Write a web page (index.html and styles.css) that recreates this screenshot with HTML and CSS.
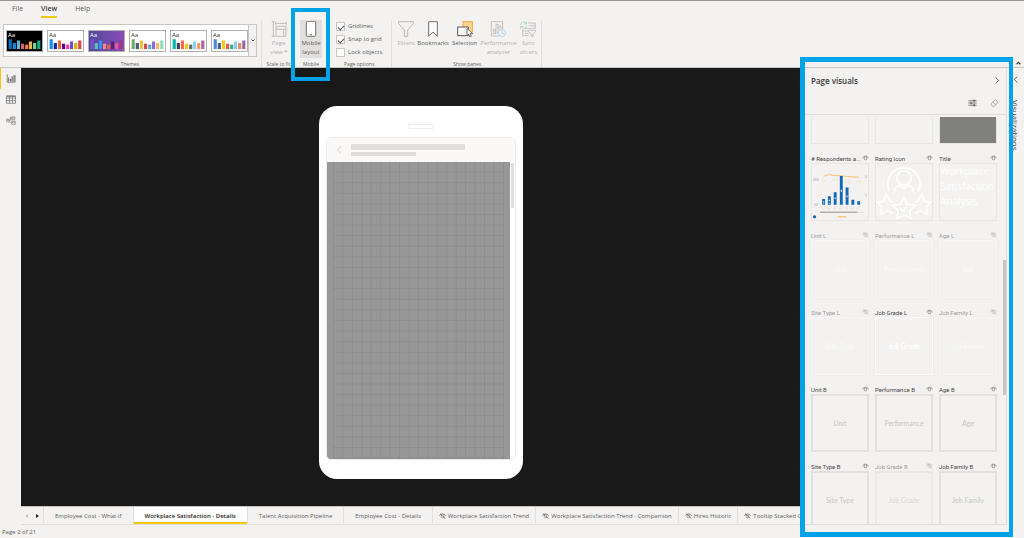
FILE: index.html
```html
<!DOCTYPE html>
<html lang="en">
<head>
<meta charset="utf-8">
<title>Report editor</title>
<link rel="stylesheet" href="styles.css">
</head>
<body>
<svg class="defs" aria-hidden="true">
  <symbol id="bars" viewBox="0 0 110 63">
    <rect x="5" y="26" width="10" height="31" fill="var(--c1)"/>
    <rect x="18" y="38" width="10" height="19" fill="var(--c2)"/>
    <rect x="31" y="30" width="10" height="27" fill="var(--c3)"/>
    <rect x="44" y="40" width="10" height="17" fill="var(--c4)"/>
    <rect x="57" y="43" width="10" height="14" fill="var(--c5)"/>
    <rect x="69" y="33" width="10" height="24" fill="var(--c6)"/>
    <rect x="82" y="38" width="10" height="19" fill="var(--c7)"/>
    <rect x="95" y="30" width="10" height="27" fill="var(--c8)"/>
  </symbol>
  <symbol id="eye" viewBox="0 0 20 16">
    <path d="M1 8Q10-3 19 8" fill="none" stroke="currentColor" stroke-width="2"/>
    <circle cx="10" cy="9" r="4" fill="none" stroke="currentColor" stroke-width="2"/>
  </symbol>
  <symbol id="eye-off" viewBox="0 0 20 16">
    <path d="M1 7Q10-3 19 7M3 1L18 15" fill="none" stroke="currentColor" stroke-width="2"/>
    <circle cx="10" cy="9" r="4" fill="none" stroke="currentColor" stroke-width="1.500"/>
  </symbol>
</svg>
<div class="app">
  <nav class="menu">
    <button>File</button>
    <button class="current">View</button>
    <button>Help</button>
  </nav>

  <header class="ribbon">
    <section class="group themes">
      <div class="gallery">
        <button class="theme t-dark" aria-label="Dark theme"><span>Aa</span><svg><use href="#bars"/></svg></button>
        <button class="theme t-default" aria-label="Default theme"><span>Aa</span><svg><use href="#bars"/></svg></button>
        <button class="theme t-purple" aria-label="Purple theme"><span>Aa</span><svg><use href="#bars"/></svg></button>
        <button class="theme t-green" aria-label="Green theme"><span>Aa</span><svg><use href="#bars"/></svg></button>
        <button class="theme t-teal" aria-label="Teal theme"><span>Aa</span><svg><use href="#bars"/></svg></button>
        <button class="theme t-blue" aria-label="Blue theme"><span>Aa</span><svg><use href="#bars"/></svg></button>
        <button class="more" aria-label="More themes"><svg viewBox="0 0 8 6"><path d="M1 1l3 3 3-3" fill="none" stroke="#444" stroke-width="2"/></svg></button>
      </div>
      <h2>Themes</h2>
    </section>

    <section class="group scale">
      <button class="tool off">
        <svg viewBox="0 0 48 48" fill="none" stroke="#b8b6b4" stroke-width="2.500"><path d="M7 1v46M2 2h10M2 46h10M14 3v10M46 3v10M14 7h32M15 16h30v30H15zM15 25h30M38 25v21"/></svg>
        <span>Page<br>view<i class="caret"></i></span>
      </button>
      <h2>Scale to fit</h2>
    </section>

    <section class="group mobile">
      <button class="tool pressed">
        <svg viewBox="0 0 48 48" fill="#fff" stroke="#555" stroke-width="2.500"><rect x="10" y="1" width="28" height="45" rx="3"/><path d="M20 41h7"/></svg>
        <span>Mobile<br>layout</span>
      </button>
      <h2>Mobile</h2>
      <div class="highlight step-one"></div>
    </section>

    <section class="group options">
      <div class="checks">
        <label><input type="checkbox" checked>Gridlines</label>
        <label><input type="checkbox" checked>Snap to grid</label>
        <label><input type="checkbox">Lock objects</label>
      </div>
      <h2>Page options</h2>
    </section>

    <section class="group panes">
      <div class="tools">
        <button class="tool off">
          <svg viewBox="0 0 48 48" fill="none" stroke="#b0aeac" stroke-width="2.500"><path d="M2 2h44v6L29 27v19H19V27L2 8z"/></svg>
          <span>Filters</span>
        </button>
        <button class="tool">
          <svg viewBox="0 0 48 48" fill="#fafafa" stroke="#555" stroke-width="2.500"><path d="M11 2h26v43L24 33 11 45z"/></svg>
          <span>Bookmarks</span>
        </button>
        <button class="tool">
          <svg viewBox="0 0 48 48" fill="#fff" stroke="#555" stroke-width="3"><path d="M18 2h28v32H18z" fill="#fbd88b" stroke="#f0a53a"/><path d="M2 18h32v26H2z"/><path d="M30 22v22l5-5 4 9 4-2-4-8h8z" stroke-width="2.500"/></svg>
          <span>Selection</span>
        </button>
        <button class="tool off">
          <svg viewBox="0 0 48 48" fill="none" stroke="#bdbbb9" stroke-width="2.500"><path d="M28 45H4V2h34v22M10 39V25h6v14zM18 39V10h6v29M27 25V16h6v8"/><circle cx="36" cy="36" r="10.500" stroke="#a9cfe5" fill="#f3f2f1"/><path d="M36 29v8h6M36 25v-3" stroke="#a9cfe5"/></svg>
          <span>Performance<br>analyzer</span>
        </button>
        <button class="tool off">
          <svg viewBox="0 0 48 48" fill="none" stroke="#bdbbb9" stroke-width="2.500"><path d="M24 6h22v8H26M8 26v18h18M14 22h32v-8M8 30h18M14 37h12"/><path d="M26 28h21v4l-8 7v8h-5v-8l-8-7z"/><path d="M2 12A9 9 0 0 1 19 8M20 1v8h-8M20 15A9 9 0 0 1 4 18M2 24v-8h8" stroke="#a9d5b5"/></svg>
          <span>Sync<br>slicers</span>
        </button>
      </div>
      <h2>Show panes</h2>
    </section>
    <button class="collapse" aria-label="Collapse ribbon"><svg viewBox="0 0 8 6"><path d="M1 5l3-3 3 3" fill="none" stroke="#444" stroke-width="2"/></svg></button>
  </header>

  <main class="workspace">
    <nav class="rail">
      <button class="active" aria-label="Report"><svg viewBox="0 0 24 24" fill="none" stroke="#666" stroke-width="2"><path d="M2 1v21h21V3"/><path d="M6 9v11M11 13v7M15 6v14M20 3v17" stroke-width="3"/></svg></button>
      <button aria-label="Data"><svg viewBox="0 0 26 24" fill="none" stroke="#777" stroke-width="2"><path d="M1 2h24v20H1zM1 8h24M1 15h24M9 2v20M17 2v20M1 4h24"/></svg></button>
      <button aria-label="Model"><svg viewBox="0 0 28 24" fill="none" stroke="#888" stroke-width="2"><path d="M13 2h12v8H13zM16 14h10v9H16zM2 8h7v8H2zM9 12h4M9 9l4-4M9 15l7 5M17 2v8M13 5h12M16 17h10M2 11h7"/></svg></button>
    </nav>

    <div class="report">
      <div class="canvas">
        <div class="phone">
          <div class="speaker"></div>
          <div class="screen">
            <div class="screen-head">
              <svg viewBox="0 0 8 12"><path d="M7 1L2 6l5 5" fill="none" stroke="#e1dfdd" stroke-width="1.500"/></svg>
              <div class="lines"><div class="line long"></div><div class="line short"></div></div>
            </div>
            <div class="screen-body">
              <div class="sheet"><div class="grid"></div></div>
              <div class="track"></div>
            </div>
          </div>
        </div>
      </div>
      <nav class="tabs">
        <button class="arrow dim" aria-label="Previous page"></button>
        <button class="arrow" aria-label="Next page"></button>
        <button class="tab">Employee Cost - What-if</button>
        <button class="tab selected">Workplace Satisfaction - Details</button>
        <button class="tab">Talent Acquisition Pipeline</button>
        <button class="tab">Employee Cost - Details</button>
        <button class="tab hidden-page"><svg><use href="#eye-off"/></svg>Workplace Satisfaction Trend</button>
        <button class="tab hidden-page"><svg><use href="#eye-off"/></svg>Workplace Satisfaction Trend - Comparison</button>
        <button class="tab hidden-page"><svg><use href="#eye-off"/></svg>Hires Historic</button>
        <button class="tab hidden-page"><svg><use href="#eye-off"/></svg>Tooltip Stacked C</button>
      </nav>
    </div>

    <aside class="visuals">
      <div class="visuals-head">
        <h1>Page visuals</h1>
        <button aria-label="Close pane"><svg class="chevron" viewBox="0 0 8 12"><path d="M1 1l5 5-5 5" fill="none" stroke="#555" stroke-width="1.500"/></svg></button>
      </div>
      <div class="visuals-tools">
        <button aria-label="Filter visuals"><svg viewBox="0 0 28 24" fill="none" stroke="#444" stroke-width="2"><path d="M1 5h26M1 12h26M1 19h26M18 1v8M9 8v8M20 15v8"/><path d="M21 2v6M12 9v6M17 16v6" stroke-width="1.500"/></svg></button>
        <button aria-label="Clear canvas"><svg viewBox="0 0 26 24" fill="none" stroke="#888" stroke-width="2"><path d="M2 15L15 2l9 8-13 13H8zM8 9l9 8"/></svg></button>
      </div>
      <div class="list">
        <div class="card blank"><div class="box"></div></div>
        <div class="card blank"><div class="box"></div></div>
        <div class="card blank"><div class="box solid"></div></div>

        <div class="card"><h3><span># Respondents a...</span><svg><use href="#eye"/></svg></h3><div class="box">
          <svg class="fill" viewBox="0 0 174 174">
            <path d="M36 38L52 33 72 36 90 36 108 39 146 41" fill="none" stroke="#f6c46c" stroke-width="3"/>
            <path d="M36 127v-18M54 127v-27M72 127V88M91 127V37M109 127V73M127 127v-16M145 127v-11" stroke="#1268b3" stroke-width="9"/>
            <path d="M36 116v4M54 111v5M72 104v5M91 80v6M109 98v5M36 123v2M54 122v2" stroke="#cfe0ef" stroke-width="4"/>
            <path d="M25 150h134" stroke="#e6e4e2" stroke-width="4"/><path d="M25 150h116" stroke="#b1afad" stroke-width="5"/>
            <circle cx="8" cy="164" r="5" fill="#1268b3"/><path d="M80 164h26" stroke="#f6c46c" stroke-width="4"/>
            <g font-size="11" fill="#aaa"><text x="2" y="52">20K</text><text x="6" y="131">0K</text><text x="164" y="42">4</text><text x="164" y="101">2</text></g>
            <g font-size="11" fill="#f8d9a2"><text x="30" y="57">4.0</text><text x="66" y="54">4.1</text><text x="102" y="59">4.0</text><text x="138" y="60">3.9</text></g>
            <g font-size="9" fill="#dddbd9"><text x="30" y="141">A1</text><text x="48" y="141">A2</text><text x="66" y="141">A3</text><text x="85" y="141">A4</text><text x="103" y="141">A5</text><text x="121" y="141">A6</text><text x="139" y="141">A7</text></g>
          </svg></div></div>
        <div class="card"><h3><span>Rating Icon</span><svg><use href="#eye"/></svg></h3><div class="box">
          <svg class="fill" viewBox="0 0 174 174" fill="none" stroke="#fff" stroke-width="5" stroke-linejoin="round">
            <path d="M42 85A50 50 0 1 1 131 85M58 91V84Q59 68 74 67L87 76 100 67Q115 68 116 84V91"/>
            <circle cx="87" cy="43" r="22"/>
            <path d="M87 103L98 125 122 128 105 145 109 169 87 158 65 169 69 145 52 128 76 125z"/>
            <path d="M53 119L45 117 32 93 23 116 3 119 18 134 14 156 35 145 52 154M121 119L129 117 142 93 151 116 171 119 156 134 160 156 139 145 122 154M75 138l8 8 14-15"/>
          </svg></div></div>
        <div class="card"><h3><span>Title</span><svg><use href="#eye"/></svg></h3><div class="box title-box">Workplace<br>Satisfaction<br>Analysis</div></div>

        <div class="card faded"><h3><span>Unit L</span><svg><use href="#eye-off"/></svg></h3><div class="box white">Unit</div></div>
        <div class="card faded"><h3><span>Performance L</span><svg><use href="#eye-off"/></svg></h3><div class="box white">Performance</div></div>
        <div class="card faded"><h3><span>Age L</span><svg><use href="#eye-off"/></svg></h3><div class="box white">Age</div></div>

        <div class="card faded"><h3><span>Site Type L</span><svg><use href="#eye-off"/></svg></h3><div class="box white">Site Type</div></div>
        <div class="card"><h3><span>Job Grade L</span><svg><use href="#eye"/></svg></h3><div class="box white">Job Grade</div></div>
        <div class="card faded"><h3><span>Job Family L</span><svg><use href="#eye-off"/></svg></h3><div class="box white">Job Family</div></div>

        <div class="card"><h3><span>Unit B</span><svg><use href="#eye"/></svg></h3><div class="box framed">Unit</div></div>
        <div class="card"><h3><span>Performance B</span><svg><use href="#eye"/></svg></h3><div class="box framed">Performance</div></div>
        <div class="card"><h3><span>Age B</span><svg><use href="#eye"/></svg></h3><div class="box framed">Age</div></div>

        <div class="card"><h3><span>Site Type B</span><svg><use href="#eye"/></svg></h3><div class="box framed">Site Type</div></div>
        <div class="card faded"><h3><span>Job Grade B</span><svg><use href="#eye-off"/></svg></h3><div class="box framed">Job Grade</div></div>
        <div class="card"><h3><span>Job Family B</span><svg><use href="#eye"/></svg></h3><div class="box framed">Job Family</div></div>
        <div class="thumb"></div>
      </div>
      <div class="highlight step-two"></div>
    </aside>

    <aside class="collapsed">
      <button aria-label="Expand pane"><svg class="chevron" viewBox="0 0 8 12"><path d="M7 1L2 6l5 5" fill="none" stroke="#555" stroke-width="1.500"/></svg></button>
      <span>Visualizations</span>
    </aside>
  </main>

  <footer class="status">Page 2 of 21</footer>
</div>
</body>
</html>
```

FILE: styles.css
```css
* { box-sizing: border-box; }

body {
  margin: 0;
  font-family: "Open Sans", "Noto Sans", sans-serif;
  font-size: 6px;
  line-height: 9px;
  color: #605e5c;
  background: #f3f2f1;
}

h1, h2, h3 { margin: 0; font-weight: 400; }

button {
  margin: 0;
  padding: 0;
  border: 0;
  background: none;
  font: inherit;
  color: inherit;
}

svg { display: block; }
.defs { display: none; }

.app {
  display: flex;
  flex-direction: column;
  height: 100vh;
  overflow: hidden;
  border-top: 1px solid #979593;
}

/* Menu */
.menu {
  display: flex;
  gap: 18px;
  height: 19px;
  padding-left: 12px;
  font-size: 7px;
}
.menu button { height: 17px; border-bottom: 2px solid transparent; }
.menu .current { font-weight: 600; color: #3b3a39; border-color: #f2c811; }

/* Ribbon */
.ribbon {
  display: flex;
  height: 48px;
  flex: none;
  border-bottom: 1px solid #c8c6c4;
}
.group {
  position: relative;
  display: flex;
  flex-direction: column;
  align-items: center;
  justify-content: space-between;
}
.group h2 { font-size: 5px; line-height: 6px; white-space: nowrap; }
.themes { padding: 4px 4px 0 3px; border-right: 1px solid #e1dfdd; }
.gallery {
  display: flex;
  align-items: center;
  gap: 4px;
  height: 33px;
  padding-left: 2px;
  border: 1px solid #c8c6c4;
  background: #fff;
}
.theme {
  position: relative;
  width: 37px;
  height: 22px;
  border: 1px solid #b3b0ad;
  background: #fff;
}
.theme svg { width: 100%; height: 100%; }
.theme span {
  position: absolute;
  top: 0;
  left: 1px;
  line-height: 8px;
  color: #333;
}
.t-dark { background: #000; --c1: #1170b8; --c2: #1d86d8; --c3: #62b6d8; --c4: #d9636e; --c5: #ee7e58; --c6: #f5b453; --c7: #7cd58d; --c8: #14ad91; }
.t-default { --c1: #118dff; --c2: #12239e; --c3: #e66c37; --c4: #6b007b; --c5: #e044a7; --c6: #744ec2; --c7: #d9b300; --c8: #d64550; }
.t-purple { background: linear-gradient(90deg, #4e4a9e, #8a4db5); --c1: #7b4fd0; --c2: #54c6bb; --c3: #3f8bff; --c4: #f58a78; --c5: #ee5a52; --c6: #5a1e78; --c7: #e65a9c; --c8: #a23582; }
.t-green { --c1: #70b05e; --c2: #4a588a; --c3: #f0c23e; --c4: #cf4b4b; --c5: #62a8dc; --c6: #8c6bd1; --c7: #f2b76b; --c8: #94dcb8; }
.t-teal { --c1: #01b8aa; --c2: #374649; --c3: #fd625e; --c4: #f2c80f; --c5: #5f6b6d; --c6: #8ad4eb; --c7: #fe9666; --c8: #a66999; }
.t-blue { --c1: #4a8ddc; --c2: #4c5d8a; --c3: #f3c911; --c4: #dc5b57; --c5: #33ae81; --c6: #95c8f0; --c7: #dd915f; --c8: #9a64a0; }
.t-dark span, .t-purple span { color: #fff; }
.more {
  display: grid;
  place-items: center;
  align-self: stretch;
  width: 8px;
  margin-left: -4px;
  border-left: 1px solid #c8c6c4;
  background: #f3f2f1;
}
.more svg { width: 4px; height: 3px; }

.tool {
  display: flex;
  flex-direction: column;
  align-items: center;
  gap: 2px;
  height: 38px;
  padding: 1px 1px 0;
  white-space: nowrap;
}
.tool svg { width: 16px; height: 16px; }
.tool.off { color: #b3b0ad; }
.tool.pressed { width: 22px; background: #e1dfdd; }
.tools { display: flex; gap: 1px; }
.caret {
  display: inline-block;
  width: 2px;
  height: 2px;
  margin: 0 0 2px 2px;
  border: solid currentColor;
  border-width: 0 1px 1px 0;
  transform: rotate(45deg);
}
.scale { width: 33px; }
.mobile { width: 32px; }
.options { padding: 2px 9px 0; border-right: 1px solid #e1dfdd; }
.checks { display: grid; gap: 4px; }
.checks label { display: flex; align-items: center; gap: 3px; }
.checks input {
  appearance: none;
  display: grid;
  place-items: center;
  width: 9px;
  height: 9px;
  margin: 0;
  border: 1px solid #c8c6c4;
  background: #fff;
}
.checks input:checked::before {
  content: "";
  width: 5px;
  height: 3px;
  border: solid #555;
  border-width: 0 0 1px 1px;
  transform: rotate(-45deg);
}
.panes { padding: 0 3px 0 4px; border-right: 1px solid #e1dfdd; }
.collapse { margin-left: auto; padding: 0 3px 2px 0; align-self: flex-end; }
.collapse svg { width: 5px; height: 4px; }

.highlight {
  position: absolute;
  z-index: 5;
  border: 4px solid #00a2e8;
  pointer-events: none;
}
.step-one { inset: -12px -3px -14px -4px; }
.step-two { inset: -11px -7px -13px -4px; border-width: 5px 4px 5px 5px; }

/* Workspace */
.workspace { display: flex; flex: 1; min-height: 0; }
.rail { flex: none; width: 21px; }
.rail button {
  display: grid;
  place-items: center;
  width: 100%;
  height: 21px;
  border-left: 1px solid transparent;
}
.rail .active { border-color: #f2c811; }
.rail svg { width: 10px; height: 9px; }

.report {
  display: flex;
  flex: 1;
  flex-direction: column;
  min-width: 0;
}
.canvas {
  display: flex;
  flex: 1;
  justify-content: center;
  min-height: 0;
  padding: 38px 0 27px 16px;
  background: #191919;
}
.phone {
  display: flex;
  flex-direction: column;
  align-items: center;
  width: 204px;
  padding: 18px 7px 19px;
  border-radius: 18px;
  background: #fff;
}
.speaker {
  flex: none;
  width: 26px;
  height: 5px;
  margin-bottom: 8px;
  border: 1px solid #edebe9;
  border-radius: 2px;
}
.screen {
  display: flex;
  flex: 1;
  flex-direction: column;
  align-self: stretch;
  overflow: hidden;
  border: 1px solid #edebe9;
  border-radius: 5px;
}
.screen-head {
  display: flex;
  align-items: center;
  gap: 9px;
  height: 24px;
  padding-left: 9px;
  background: #faf9f8;
}
.screen-head svg { width: 6px; height: 10px; }
.lines { flex: 1; }
.line { height: 6px; background: #e1dfdd; }
.line.long { width: 70%; }
.line.short { width: 40%; height: 4px; margin-top: 2px; }
.screen-body { display: flex; flex: 1; }
.sheet { flex: 1; padding: 0 6px; background: #979797; }
.grid {
  height: 100%;
  border-right: 1px solid #8e8e8e;
  background-image: linear-gradient(90deg, #8e8e8e 1px, transparent 1px), linear-gradient(0deg, #8e8e8e 1px, transparent 1px);
  background-size: calc(100% / 18) calc(100% / 28);
}
.track { width: 5px; padding: 1px 0 0 1px; }
.track::before { content: ""; display: block; width: 3px; height: 45px; background: #e1dfdd; }

/* Page tabs */
.tabs {
  display: flex;
  height: 19px;
  flex: none;
  overflow: hidden;
  border-top: 1px solid #c8c6c4;
  border-bottom: 1px solid #e1dfdd;
}
.arrow { display: grid; flex: none; place-items: center; width: 11px; }
.arrow::before {
  content: "";
  border: solid transparent;
  border-width: 2px 0 2px 3px;
  border-left-color: #222;
}
.arrow.dim::before { border-width: 2px 3px 2px 0; border-right-color: #c8c6c4; }
.tab {
  display: flex;
  flex: none;
  align-items: center;
  padding: 3px 11px 0;
  border-left: 1px solid #e1dfdd;
  border-bottom: 2px solid transparent;
  white-space: nowrap;
}
.tab.selected { font-weight: 600; color: #252423; background: #fff; border-bottom-color: #f2c811; }
.hidden-page { gap: 2px; padding: 3px 6px 0; }
.hidden-page svg { width: 7px; height: 6px; }

/* Page visuals */
.visuals {
  position: relative;
  display: flex;
  flex: none;
  flex-direction: column;
  width: 203px;
  border-right: 1px solid #e1dfdd;
  border-bottom: 1px solid #e1dfdd;
}
.visuals-head {
  display: flex;
  align-items: center;
  justify-content: space-between;
  height: 24px;
  padding: 0 6px 0 7px;
}
.visuals-head h1 { font-size: 8px; font-weight: 600; color: #3b3a39; }
.chevron { width: 5px; height: 7px; }
.visuals-tools {
  display: flex;
  align-items: center;
  justify-content: flex-end;
  gap: 13px;
  height: 23px;
  padding-right: 7px;
  border-bottom: 1px solid #e1dfdd;
}
.visuals-tools svg { width: 9px; height: 8px; }
.list {
  position: relative;
  display: grid;
  flex: 1;
  grid-template-columns: repeat(3, 58px);
  align-content: start;
  gap: 9px 6px;
  min-height: 0;
  overflow: hidden;
  margin-top: 2px;
  padding-left: 7px;
}
.card h3 {
  display: flex;
  align-items: center;
  justify-content: space-between;
  height: 10px;
  font-family: Roboto, "Open Sans", sans-serif;
  font-size: 6px;
  color: #484644;
}
.card h3 span { white-space: nowrap; }
.card h3 svg { flex: none; width: 7px; height: 6px; color: #797775; }
.box {
  display: grid;
  place-items: center;
  height: 58px;
  border: 1px solid #e9e7e5;
}
.blank .box { height: 27px; border-top: 0; }
.box.solid { background: #80807e; }
.fill { width: 100%; height: 100%; font-family: inherit; }
.title-box {
  place-items: start;
  overflow: hidden;
  font-size: 10px;
  line-height: 15px;
  white-space: nowrap;
  color: #fff;
}
.white, .framed { font-family: Lato, "Open Sans", sans-serif; font-size: 7px; }
.white { border-color: #fafafa; outline: 1px solid #efedeb; font-weight: 700; color: #fff; }
.framed { border: 2px solid #e3e1df; color: #c8c6c4; }
.faded { opacity: 0.5; }
.thumb {
  position: absolute;
  top: 143px;
  right: 0;
  width: 3px;
  height: 135px;
  background: #c8c6c4;
}

.collapsed {
  display: flex;
  flex: none;
  flex-direction: column;
  align-items: center;
  gap: 17px;
  width: 17px;
  padding-top: 8px;
  font-size: 8px;
  color: #3b3a39;
}
.collapsed span { writing-mode: vertical-rl; }

.status {
  flex: none;
  height: 13px;
  padding: 3px 0 0 2px;
}
```
